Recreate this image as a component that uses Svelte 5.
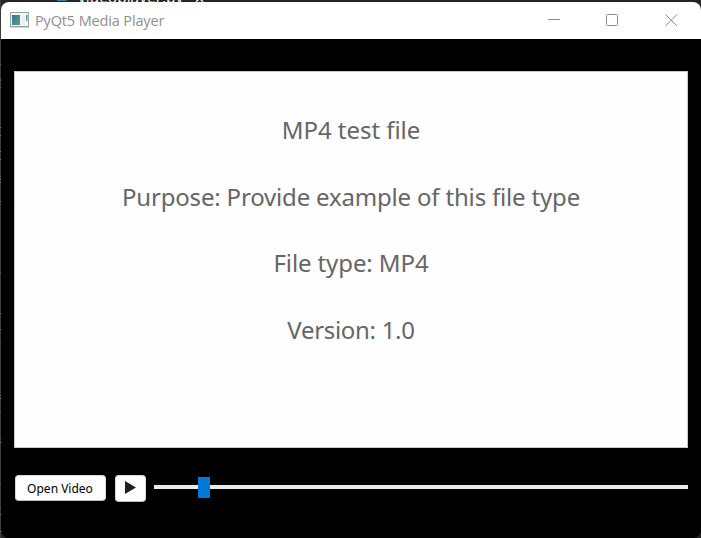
<script>
  const lines = [
    { text: 'MP4 test file', spacing: -0.05 },
    { text: 'Purpose: Provide example of this file type', spacing: -0.18 },
    { text: 'File type: MP4', spacing: -0.1 },
    { text: 'Version: 1.0', spacing: -0.3 }
  ];
  const specks = [
    [64, '#80508a'], [79, '#426d9a'], [80, '#397846'], [84, '#397846'], [87, '#32888a'],
    [127, '#3f8877'], [135, '#478b84'], [151, '#478b84'], [159, '#478b84'],
    [176, '#80608a'], [179, '#80608a'], [182, '#80608a'], [201, '#80508a'], [204, '#994f22'],
    [272, '#397846'], [313, '#628a32'], [329, '#628a32'], [341, '#565699'],
    [391, '#464675'], [395, '#994f32'], [398, '#a08052'], [412, '#565699'],
    [438, '#994f32'], [442, '#a08052'], [484, '#565699'], [508, '#397846'], [514, '#32888a'], [531, '#a08052']
  ];
</script>

<div class="desktop">
  <div class="backdrop" aria-hidden="true">
    <i></i><span class="tab">videoplayer.py</span><span class="tabclose">✕</span>
    {#each specks as [y, color]}
      <b style="top: {y}px; background: {color}"></b>
    {/each}
  </div>
  <main class="window">
    <header>
      <svg class="appicon" width="19" height="16" viewBox="0 0 19 16">
        <defs>
          <linearGradient id="screen" x1="0" y1="0" x2="1" y2="1">
            <stop offset="0" stop-color="#3a6f9b" /><stop offset="1" stop-color="#55a478" />
          </linearGradient>
          <linearGradient id="bar" x1="0" y1="0" x2="0" y2="1">
            <stop offset="0" stop-color="#4a93a0" /><stop offset="1" stop-color="#62b080" />
          </linearGradient>
        </defs>
        <rect x=".5" y=".5" width="18" height="14" fill="#f4f6f7" stroke="#97a2ae" />
        <path d="M0 15.5H19" stroke="#d3d6d9" />
        <rect x="2" y="3" width="8" height="10" fill="url(#screen)" />
        <rect x="12" y="3" width="3" height="10" fill="#eceeef" />
        <rect x="16" y="3" width="1.5" height="6" fill="url(#bar)" />
      </svg>
      <h1>PyQt5 Media Player</h1>
      <svg class="controls" width="132" height="14" viewBox="0 0 132 14" fill="none" stroke="#8b8b8b">
        <path d="M0 6.5H12" />
        <rect x="58.5" y="1.5" width="11" height="11" rx="1" />
        <path d="M117.5 1.5L129 13M129 1.5L117.5 13" />
      </svg>
    </header>
    <section class="video">
      {#each lines as line}
        <p style="letter-spacing: {line.spacing}px"><span>{line.text}</span></p>
      {/each}
    </section>
    <footer>
      <button class="open">Open Video</button>
      <button class="play" aria-label="Play">
        <svg width="11" height="13" viewBox="0 0 11 13"><path d="M0 0L11 6.5L0 13Z" fill="#202020" /></svg>
      </button>
      <div class="slider"><div class="track"></div><div class="handle"></div></div>
    </footer>
  </main>
</div>

<style>
  :global(body) { margin: 0; }
  .desktop {
    position: relative;
    box-sizing: border-box;
    width: 701px;
    height: 538px;
    padding: 2px 0 0 1px;
    overflow: hidden;
    background: #252526;
  }
  .backdrop { position: absolute; inset: 0; background: linear-gradient(90deg, #3c3c40 1px, #252526 1px); }
  .backdrop b { position: absolute; left: 0; width: 1px; height: 1px; }
  .backdrop i { position: absolute; left: 57px; top: 0; width: 10px; height: 1px; background: #387c9d; }
  .tab, .tabclose {
    position: absolute;
    top: -12px;
    left: 78px;
    color: #fff;
    font: 15.5px/18px "Open Sans", sans-serif;
    white-space: nowrap;
  }
  .tabclose { left: 194px; top: -10px; font: 13px/18px "DejaVu Sans", sans-serif; }
  .window {
    position: relative;
    display: flex;
    flex-direction: column;
    width: 700px;
    height: 536px;
    border-radius: 8px;
    overflow: hidden;
    background: #000;
  }
  header {
    display: flex;
    box-sizing: border-box;
    height: 37px;
    padding: 0 21px 0 9px;
    align-items: center;
    background: #fff;
  }
  .appicon { flex: none; margin-bottom: 1px; }
  h1 {
    margin: 0 auto 0 6px;
    color: #8f8f8f;
    font: 400 14.5px/20px "Open Sans", sans-serif;
    letter-spacing: -0.14px;
    white-space: nowrap;
  }
  .controls { flex: none; margin-bottom: 1px; }
  .video {
    box-sizing: border-box;
    width: 674px;
    height: 377px;
    margin: 32px 0 0 13px;
    padding-top: 25.4px;
    border: 1px solid #c9c9c9;
    background: #fefefe;
  }
  p {
    margin: 0;
    height: 66.4px;
    color: #666;
    text-align: center;
    font: 24px/66px "Noto Sans", sans-serif;
    white-space: nowrap;
  }
  footer { display: flex; align-items: flex-start; padding: 27px 13px 0 14px; }
  button {
    display: flex;
    box-sizing: border-box;
    align-items: center;
    justify-content: center;
    margin: 0;
    padding: 0;
    border: 1px solid #d9d9d9;
    border-bottom-color: #bdbdbd;
    border-radius: 4px;
    background: #fdfdfd;
  }
  .open {
    width: 91px;
    height: 26px;
    padding: 1px 1px 0 0;
    color: #000;
    font: 12px/18px "Noto Sans", sans-serif;
    white-space: nowrap;
  }
  .play { width: 31px; height: 27px; padding-bottom: 2px; margin-left: 9px; }
  .slider { position: relative; flex: 1; height: 24px; margin-left: 8px; padding-top: 10px; }
  .track { height: 4px; background: #e7eaea; }
  .handle { position: absolute; left: 44px; top: 2px; width: 12px; height: 21px; background: #0078d7; }
</style>
